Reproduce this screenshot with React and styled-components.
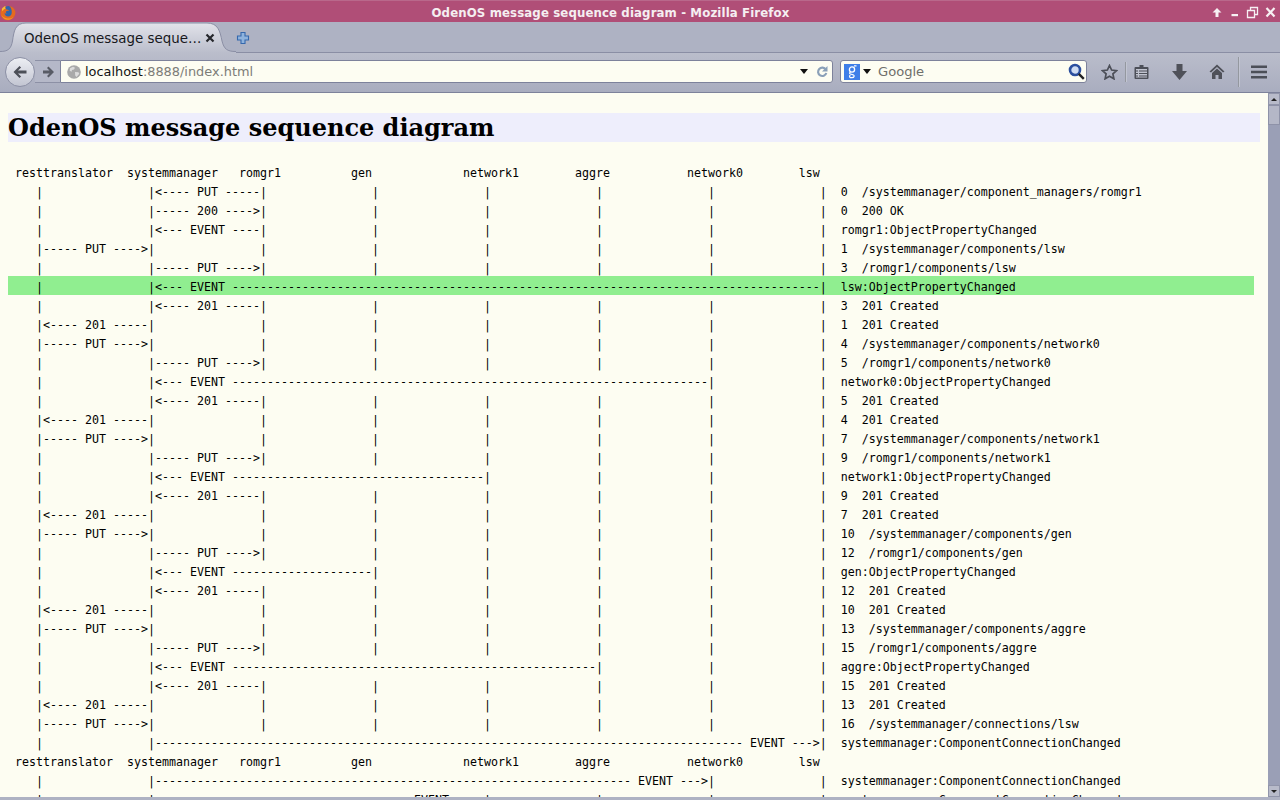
import React from 'react'
import styled, { createGlobalStyle } from 'styled-components'

const GlobalStyle = createGlobalStyle`
  html, body {
    margin: 0;
    padding: 0;
    height: 100%;
    overflow: hidden;
    background: #aeb2c3;
  }
`

const BARS = [4, 20, 36, 52, 68, 84, 100, 116]

const lane = (from, to, label) => {
  const chars = Array(117).fill(' ')
  BARS.forEach(b => { chars[b] = '|' })
  const start = BARS[from] + 1
  const end = BARS[to]
  for (let i = start; i < end; i++) chars[i] = label[i - start]
  return chars.join('')
}
const put = from => lane(from, from + 1, '----- PUT ---->')
const putBack = from => lane(from, from + 1, '<---- PUT -----')
const ok200 = from => lane(from, from + 1, '----- 200 ---->')
const created = from => lane(from, from + 1, '<---- 201 -----')
const eventBack = to => {
  const len = BARS[to] - BARS[1] - 1
  return lane(1, to, '<--- EVENT '.padEnd(len, '-'))
}
const eventFwd = to => {
  const len = BARS[to] - BARS[1] - 1
  return lane(1, to, ' EVENT --->'.padStart(len, '-'))
}

const HEADER = ' resttranslator  systemmanager   romgr1          gen             network1        aggre           network0        lsw'

const ROWS = [
  { line: HEADER },
  { line: putBack(1), note: '0  /systemmanager/component_managers/romgr1' },
  { line: ok200(1), note: '0  200 OK' },
  { line: eventBack(2), note: 'romgr1:ObjectPropertyChanged' },
  { line: put(0), note: '1  /systemmanager/components/lsw' },
  { line: put(1), note: '3  /romgr1/components/lsw' },
  { line: eventBack(7), note: 'lsw:ObjectPropertyChanged', active: true },
  { line: created(1), note: '3  201 Created' },
  { line: created(0), note: '1  201 Created' },
  { line: put(0), note: '4  /systemmanager/components/network0' },
  { line: put(1), note: '5  /romgr1/components/network0' },
  { line: eventBack(6), note: 'network0:ObjectPropertyChanged' },
  { line: created(1), note: '5  201 Created' },
  { line: created(0), note: '4  201 Created' },
  { line: put(0), note: '7  /systemmanager/components/network1' },
  { line: put(1), note: '9  /romgr1/components/network1' },
  { line: eventBack(4), note: 'network1:ObjectPropertyChanged' },
  { line: created(1), note: '9  201 Created' },
  { line: created(0), note: '7  201 Created' },
  { line: put(0), note: '10  /systemmanager/components/gen' },
  { line: put(1), note: '12  /romgr1/components/gen' },
  { line: eventBack(3), note: 'gen:ObjectPropertyChanged' },
  { line: created(1), note: '12  201 Created' },
  { line: created(0), note: '10  201 Created' },
  { line: put(0), note: '13  /systemmanager/components/aggre' },
  { line: put(1), note: '15  /romgr1/components/aggre' },
  { line: eventBack(5), note: 'aggre:ObjectPropertyChanged' },
  { line: created(1), note: '15  201 Created' },
  { line: created(0), note: '13  201 Created' },
  { line: put(0), note: '16  /systemmanager/connections/lsw' },
  { line: eventFwd(7), note: 'systemmanager:ComponentConnectionChanged' },
  { line: HEADER },
  { line: eventFwd(6), note: 'systemmanager:ComponentConnectionChanged' },
  { line: eventFwd(4), note: 'systemmanager:ComponentConnectionChanged' },
]

const Window = styled.div`
  width: 1280px;
  height: 800px;
  display: flex;
  flex-direction: column;
  overflow: hidden;
  background: #aeb2c3;
  font-family: "DejaVu Sans", sans-serif;
`
const TitleBar = styled.div`
  height: 22px;
  flex: none;
  display: flex;
  align-items: center;
  background: #b04e77;
  border-top: 1px solid #b9688b;
  box-sizing: border-box;
`
const Logo = styled.svg`
  width: 16px;
  height: 16px;
  flex: none;
  margin-top: 2px;
`
const WindowTitle = styled.div`
  flex: 1;
  text-align: center;
  color: #f5eef1;
  font-size: 11.75px;
  font-weight: bold;
  letter-spacing: 0.12px;
  padding-right: 3px;
  margin-top: 2px;
`
const WindowButtons = styled.div`
  flex: none;
  width: 72px;
  display: flex;
  align-items: center;
`
const WindowButton = styled.svg`
  width: ${p => p.$w}px;
  height: 14px;
  flex: none;
`
const TabStrip = styled.div`
  height: 30px;
  flex: none;
  display: flex;
  align-items: flex-end;
  background: #aeb2c3;
`
const Tab = styled.div`
  position: relative;
  z-index: 1;
  width: 236px;
  height: 31px;
  margin-bottom: -1px;
  flex: none;
  display: flex;
  align-items: center;
  box-sizing: border-box;
  padding: 1px 0 0 24px;
`
const TabShape = styled.svg`
  position: absolute;
  left: 0;
  top: 0;
  width: 236px;
  height: 31px;
`
const TabLabel = styled.span`
  position: relative;
  width: 181px;
  font-size: 13.4px;
  color: #17181c;
  white-space: nowrap;
`
const TabClose = styled.svg`
  position: relative;
  width: 10px;
  height: 10px;
  flex: none;
`
const NewTab = styled.svg`
  width: 14px;
  height: 14px;
  flex: none;
  margin: 0 0 7px 0;
`
const NavBar = styled.div`
  height: 41px;
  flex: none;
  display: flex;
  align-items: center;
  box-sizing: border-box;
  padding: 0 0 2px 5px;
  background: linear-gradient(#babdcb, #a9adbf);
  border-top: 1px solid #8a8ea4;
  border-bottom: 1px solid #7d829b;
`
const BackButton = styled.div`
  position: relative;
  z-index: 1;
  width: 30px;
  height: 30px;
  flex: none;
  box-sizing: border-box;
  border-radius: 50%;
  display: flex;
  align-items: center;
  justify-content: center;
  border: 1px solid #8c90a5;
  background: linear-gradient(#eceef3, #c2c5d2);
`
const ForwardSlot = styled.div`
  width: 25px;
  height: 23px;
  flex: none;
  box-sizing: border-box;
  display: flex;
  align-items: center;
  justify-content: center;
  padding-left: 1px;
  border-top: 1px solid #8c90a5;
  border-bottom: 1px solid #8c90a5;
  background: #b5b8c8;
`
const Field = styled.div`
  height: 23px;
  flex: none;
  width: ${p => p.$w}px;
  margin-left: ${p => p.$gap || 0}px;
  box-sizing: border-box;
  display: flex;
  align-items: center;
  background: #fdfdf2;
  border: 1px solid #7d829b;
  border-radius: ${p => p.$radius};
`
const Globe = styled.svg`
  width: 14px;
  height: 14px;
  flex: none;
  margin: 0 4px 0 6px;
`
const UrlText = styled.div`
  flex: 1;
  font-size: 12.9px;
  color: #7c7c78;
  white-space: nowrap;
`
const UrlHost = styled.span`
  color: #111;
`
const SmallIcon = styled.svg`
  flex: none;
  width: ${p => p.$w}px;
  height: ${p => p.$h}px;
  margin: ${p => p.$m || 0};
`
const SearchText = styled.div`
  flex: 1;
  font-size: 13.1px;
  color: #6f6f6b;
`
const NavIcon = styled.div`
  width: ${p => p.$w}px;
  height: 24px;
  flex: none;
  margin-left: ${p => p.$gap || 0}px;
  display: flex;
  align-items: center;
  justify-content: center;
`
const Divider = styled.div`
  width: 1px;
  height: ${p => p.$h}px;
  flex: none;
  margin-left: ${p => p.$gap || 0}px;
  background: #94989f;
  box-shadow: 1px 0 0 #c2c5d2;
`
const ContentArea = styled.div`
  flex: none;
  height: 704px;
  display: flex;
  overflow: hidden;
`
const Page = styled.main`
  flex: 1;
  min-width: 0;
  overflow: hidden;
  box-sizing: border-box;
  background: #fdfdf2;
  padding: 20px 8px 0;
`
const Heading = styled.h1`
  margin: 0 0 20px;
  height: 29px;
  line-height: 29px;
  background: #eeeefc;
  color: #000;
  font-family: "DejaVu Serif", serif;
  font-size: 24px;
  font-weight: bold;
  white-space: nowrap;
`
const Diagram = styled.div`
  margin-right: 6px;
  font-family: "DejaVu Sans Mono", monospace;
  font-size: 11.63px;
  color: #000;
`
const Row = styled.div`
  height: 19px;
  box-sizing: border-box;
  padding-top: 2px;
  line-height: 19px;
  white-space: pre;
  background: ${p => (p.$active ? '#90ee90' : 'transparent')};
`
const Scrollbar = styled.div`
  width: 12px;
  flex: none;
  display: flex;
  flex-direction: column;
  background: #9a9fb6;
`
const ScrollButton = styled.div`
  height: 12px;
  flex: none;
  display: flex;
  align-items: center;
  justify-content: center;
  background: #b8bbca;
  border: 1px solid #9195aa;
  box-sizing: border-box;
`
const ScrollThumb = styled.div`
  height: 20px;
  flex: none;
  box-sizing: border-box;
  background: #b4b7c7;
  border: 1px solid #8e92a8;
`
const ScrollTrack = styled.div`
  flex: 1;
`
const BottomEdge = styled.div`
  flex: 1;
  background: #aeb2c3;
`

const FirefoxLogo = () => (
  <Logo viewBox="0 0 16 16">
    <circle cx="8.5" cy="7.5" r="6.5" fill="#2f66ad" />
    <path d="M9 .8c3 .5 5.700 2.500 6.300 5.700.7 4-2.300 8.500-7.300 8.700C3.700 15.400.5 12 .5 8c0-1.600.5-3.100 1.400-4.300 0 .9.200 1.500.6 2 .5-1.700 1.700-3 3.100-3.600-.3.900-.2 1.600.3 2.100 1.500.1 2.800.7 3.500 1.700-1.300-.4-2.900-.2-3.400.7-.4.800 0 1.600.8 2-1 .3-1.800-.2-2.200-.8-.1 2.200 1.500 3.800 3.500 3.800 2.200 0 3.800-1.800 3.600-4C12 4.800 10.900 2.300 9 .8z" fill="#e56a1e" />
    <path d="M1.900 3.700C2.900 2.300 4.300 1.300 5.700 1c-.7 1-.7 2 0 2.600C4.200 4 3.200 5 2.700 6.200 2.100 5.600 1.900 4.700 1.900 3.700z" fill="#f8bb35" />
    <path d="M1.500 10c1 3 3.700 4.800 6.700 4.700 2.200-.1 4.200-1.200 5.400-3-2 1.800-4.800 2.300-7.300 1.500C4.200 12.600 2.500 11.500 1.500 10z" fill="#f39a28" />
  </Logo>
)

const App = () => (
  <Window>
    <GlobalStyle />
    <TitleBar>
      <FirefoxLogo />
      <WindowTitle>OdenOS message sequence diagram - Mozilla Firefox</WindowTitle>
      <WindowButtons>
        <WindowButton $w={18} viewBox="0 0 18 14">
          <path d="M9 3l4.500 4.500h-3V12h-3V7.500h-3z" fill="#f6f0f3" />
        </WindowButton>
        <WindowButton $w={18} viewBox="0 0 18 14">
          <rect x="5.500" y="9" width="6.500" height="2.200" fill="#f6f0f3" />
        </WindowButton>
        <WindowButton $w={18} viewBox="0 0 18 14">
          <path d="M3.500 5.500h7v7h-7zM6.500 5V2.500h7v7H11" fill="none" stroke="#f6f0f3" strokeWidth="1.300" />
        </WindowButton>
        <WindowButton $w={18} viewBox="0 0 18 14">
          <path d="M4.500 3l8 8.500M12.500 3l-8 8.500" fill="none" stroke="#f6f0f3" strokeWidth="2.200" />
        </WindowButton>
      </WindowButtons>
    </TitleBar>
    <TabStrip>
      <Tab>
        <TabShape viewBox="0 0 236 31">
          <defs>
            <linearGradient id="tabFill" x1="0" y1="0" x2="0" y2="1">
              <stop offset="0" stopColor="#e2e3ea" />
              <stop offset="1" stopColor="#babdcb" />
            </linearGradient>
          </defs>
          <path d="M0 29.500C8 29.500 11 27 12.500 19 14 9 15 1 26 1H207C218 1 220 9 222 19 224 27 227 29.500 236 29.500V31H0z" fill="url(#tabFill)" />
          <path d="M0 29.500C8 29.500 11 27 12.500 19 14 9 15 1 26 1H207C218 1 220 9 222 19 224 27 227 29.500 236 29.500" fill="none" stroke="#8a8ea4" />
        </TabShape>
        <TabLabel>OdenOS message seque…</TabLabel>
        <TabClose viewBox="0 0 10 10">
          <path d="M1.500 1.500l7 7M8.500 1.500l-7 7" stroke="#26272c" strokeWidth="2.200" fill="none" />
        </TabClose>
      </Tab>
      <NewTab viewBox="0 0 14 14">
        <path d="M5 1.500h4V5h3.500v4H9v3.500H5V9H1.500V5H5z" fill="#8fb3dd" stroke="#3568ad" strokeWidth="1.100" />
      </NewTab>
    </TabStrip>
    <NavBar>
      <BackButton>
        <SmallIcon $w={16} $h={14} viewBox="0 0 16 14">
          <path d="M7.500 1L1.500 7l6 6 1.600-1.500L6 8.500h8.500v-3H6l3.100-3z" fill="#4c4f58" />
        </SmallIcon>
      </BackButton>
      <ForwardSlot>
        <SmallIcon $w={13} $h={12} viewBox="0 0 13 12">
          <path d="M6.500.5l5.500 5.500-5.500 5.500L5 10l2.500-2.500H1v-3h6.500L5 2z" fill="#585b65" />
        </SmallIcon>
      </ForwardSlot>
      <Field $w={773} $radius="0 3px 3px 0">
        <Globe viewBox="0 0 14 14">
          <circle cx="7" cy="7" r="6.800" fill="#a9a9a9" />
          <path d="M3 3.200l3-1.500 2 1-1 1.800-2 .5-.5 1.800-1.800-1zM8 7l3.500.3.800 1.500-2.800 3.300-1.300-1.500z" fill="#dcdcdc" />
        </Globe>
        <UrlText><UrlHost>localhost</UrlHost>:8888/index.html</UrlText>
        <SmallIcon $w={8} $h={5} $m="0 8px 0 0" viewBox="0 0 8 5">
          <path d="M0 0h8L4 5z" fill="#111" />
        </SmallIcon>
        <SmallIcon $w={12} $h={13} $m="0 4px 0 0" viewBox="0 0 12 13">
          <path d="M9.800 4.500A4.200 4.200 0 1 0 10.300 8" fill="none" stroke="#8aa0b8" strokeWidth="2.200" />
          <path d="M11.500 1v5.500H6z" fill="#8aa0b8" />
        </SmallIcon>
      </Field>
      <Field $w={247} $gap={7} $radius="3px">
        <SmallIcon $w={16} $h={16} $m="0 3px 0 3px" viewBox="0 0 16 16">
          <rect width="16" height="16" fill="#3f7fe8" />
          <circle cx="8" cy="5.500" r="2.600" fill="none" stroke="#fff" strokeWidth="1.300" />
          <path d="M10 1.800h2.500M6.500 8c-1.500 1-1 1.700 0 2l2.700.8c1.600.6 1.200 2.800-1.300 2.900-2.300.1-3.200-1.500-1.500-2.700" fill="none" stroke="#fff" strokeWidth="1.200" />
        </SmallIcon>
        <SmallIcon $w={8} $h={5} $m="0 7px 0 0" viewBox="0 0 8 5">
          <path d="M0 0h8L4 5z" fill="#111" />
        </SmallIcon>
        <SearchText>Google</SearchText>
        <SmallIcon $w={17} $h={17} $m="0 1px 0 0" viewBox="0 0 17 17">
          <circle cx="7" cy="7" r="5" fill="#cfdcf2" stroke="#2b4f9e" strokeWidth="2.600" />
          <path d="M10.800 10.800l5 5" stroke="#222" strokeWidth="2.400" />
        </SmallIcon>
      </Field>
      <NavIcon $w={31} $gap={7}>
        <SmallIcon $w={17} $h={16} viewBox="0 0 17 16">
          <path d="M8.500 1.500l2.100 4.500 4.900.6-3.600 3.300 1 4.900-4.400-2.500-4.400 2.500 1-4.900L1.500 6.600l4.900-.6z" fill="none" stroke="#4c4f58" strokeWidth="1.700" />
        </SmallIcon>
      </NavIcon>
      <Divider $h={20} />
      <NavIcon $w={30}>
        <SmallIcon $w={15} $h={16} viewBox="0 0 15 16">
          <path d="M5.500 1h4v2h4a1 1 0 0 1 1 1v10a1 1 0 0 1-1 1h-12a1 1 0 0 1-1-1V4a1 1 0 0 1 1-1h4z" fill="#4c4f58" />
          <path d="M2 5h11v8.500H2z" fill="#c0c3cf" />
          <path d="M2 6.500h2v1H2zM5 6.500h8v1H5zM2 9h2v1H2zM5 9h8v1H5zM2 11.500h2v1H2zM5 11.500h8v1H5z" fill="#4c4f58" />
        </SmallIcon>
      </NavIcon>
      <NavIcon $w={46}>
        <SmallIcon $w={15} $h={16} viewBox="0 0 15 16">
          <path d="M4.500 0h6v7H15l-7.500 9L0 7h4.500z" fill="#4f5159" />
        </SmallIcon>
      </NavIcon>
      <NavIcon $w={30}>
        <SmallIcon $w={16} $h={15} viewBox="0 0 16 15">
          <path d="M8 .5L.5 7.500 2 8.500 8 3l6 5.500 1.500-1L8 .5z" fill="#4f5159" />
          <path d="M3 9l5-4.500L13 9v6H9.500v-4h-3v4H3z" fill="#4f5159" />
        </SmallIcon>
      </NavIcon>
      <Divider $h={30} $gap={6} />
      <NavIcon $w={40}>
        <SmallIcon $w={16} $h={14} viewBox="0 0 16 14">
          <path d="M0 .5h16v2.500H0zM0 5.700h16v2.500H0zM0 11h16v2.500H0z" fill="#4c4f58" />
        </SmallIcon>
      </NavIcon>
    </NavBar>
    <ContentArea>
      <Page>
        <Heading>OdenOS message sequence diagram</Heading>
        <Diagram>
          {ROWS.map((row, i) => (
            <Row key={i} $active={row.active}>
              {row.note ? `${row.line}  ${row.note}` : row.line}
            </Row>
          ))}
        </Diagram>
      </Page>
      <Scrollbar>
        <ScrollButton>
          <SmallIcon $w={6} $h={3} viewBox="0 0 6 3">
            <path d="M3 0l3 3H0z" fill="#222" />
          </SmallIcon>
        </ScrollButton>
        <ScrollThumb />
        <ScrollTrack />
        <ScrollButton>
          <SmallIcon $w={6} $h={3} viewBox="0 0 6 3">
            <path d="M0 0h6L3 3z" fill="#222" />
          </SmallIcon>
        </ScrollButton>
      </Scrollbar>
    </ContentArea>
    <BottomEdge />
  </Window>
)

export default App
